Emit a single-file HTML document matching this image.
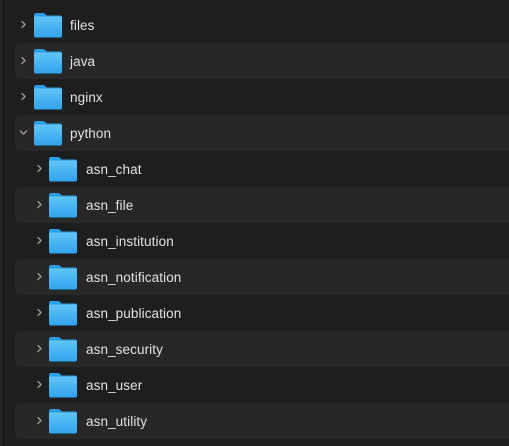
<!DOCTYPE html><html><head><style>
body{margin:0;width:509px;height:446px;background:#1e1e1e;overflow:hidden;position:relative;font-family:"Liberation Sans",sans-serif}
.strip{position:absolute;left:0;top:0;width:3px;height:446px;background:#242424;border-right:1px solid #0e0e0e}
.row{position:absolute;left:15px;right:-10px;height:36px;border-radius:6px}
.alt{background:#272727}
.chev{position:absolute;top:13px;width:9px;height:9px}
.fold{position:absolute;top:5px;width:30px;height:26px}
.t{position:absolute;top:11px;font-size:13.5px;color:#e2e2e2;letter-spacing:0.1px}
</style></head><body>
<div class="strip"></div>
<svg width="0" height="0" style="position:absolute"><defs>
<linearGradient id="g" x1="0" y1="0" x2="0" y2="1"><stop offset="0" stop-color="#62c4f7"/><stop offset="1" stop-color="#2fa3ea"/></linearGradient>
<symbol id="f" viewBox="0 0 30 26"><path d="M1 3.5Q1 1 3 1H10Q11.5 1 12.5 2.3L13.5 3.5H27Q29 3.5 29 5.5V8H1Z" fill="#2b9de4"/><rect x="1" y="4.5" width="28" height="21" rx="1.8" fill="url(#g)"/></symbol>
<symbol id="r" viewBox="0 0 9 9"><path d="M3 1.5L6 4.5L3 7.5" stroke="#9a9a9a" stroke-width="1.4" fill="none" stroke-linecap="round"/></symbol>
<symbol id="d" viewBox="0 0 9 9"><path d="M1.5 3L4.5 6L7.5 3" stroke="#9a9a9a" stroke-width="1.4" fill="none" stroke-linecap="round"/></symbol>
</defs></svg>
<div class="row" style="top:7px"><svg class="chev" style="left:4px"><use href="#r"/></svg><svg class="fold" style="left:18px"><use href="#f"/></svg><span class="t" style="left:55px">files</span></div>
<div class="row alt" style="top:43px"><svg class="chev" style="left:4px"><use href="#r"/></svg><svg class="fold" style="left:18px"><use href="#f"/></svg><span class="t" style="left:55px">java</span></div>
<div class="row" style="top:79px"><svg class="chev" style="left:4px"><use href="#r"/></svg><svg class="fold" style="left:18px"><use href="#f"/></svg><span class="t" style="left:55px">nginx</span></div>
<div class="row alt" style="top:115px"><svg class="chev" style="left:4px"><use href="#d"/></svg><svg class="fold" style="left:18px"><use href="#f"/></svg><span class="t" style="left:55px">python</span></div>
<div class="row" style="top:151px"><svg class="chev" style="left:20px"><use href="#r"/></svg><svg class="fold" style="left:33px"><use href="#f"/></svg><span class="t" style="left:71px">asn_chat</span></div>
<div class="row alt" style="top:187px"><svg class="chev" style="left:20px"><use href="#r"/></svg><svg class="fold" style="left:33px"><use href="#f"/></svg><span class="t" style="left:71px">asn_file</span></div>
<div class="row" style="top:223px"><svg class="chev" style="left:20px"><use href="#r"/></svg><svg class="fold" style="left:33px"><use href="#f"/></svg><span class="t" style="left:71px">asn_institution</span></div>
<div class="row alt" style="top:259px"><svg class="chev" style="left:20px"><use href="#r"/></svg><svg class="fold" style="left:33px"><use href="#f"/></svg><span class="t" style="left:71px">asn_notification</span></div>
<div class="row" style="top:295px"><svg class="chev" style="left:20px"><use href="#r"/></svg><svg class="fold" style="left:33px"><use href="#f"/></svg><span class="t" style="left:71px">asn_publication</span></div>
<div class="row alt" style="top:331px"><svg class="chev" style="left:20px"><use href="#r"/></svg><svg class="fold" style="left:33px"><use href="#f"/></svg><span class="t" style="left:71px">asn_security</span></div>
<div class="row" style="top:367px"><svg class="chev" style="left:20px"><use href="#r"/></svg><svg class="fold" style="left:33px"><use href="#f"/></svg><span class="t" style="left:71px">asn_user</span></div>
<div class="row alt" style="top:403px"><svg class="chev" style="left:20px"><use href="#r"/></svg><svg class="fold" style="left:33px"><use href="#f"/></svg><span class="t" style="left:71px">asn_utility</span></div>
</body></html>
